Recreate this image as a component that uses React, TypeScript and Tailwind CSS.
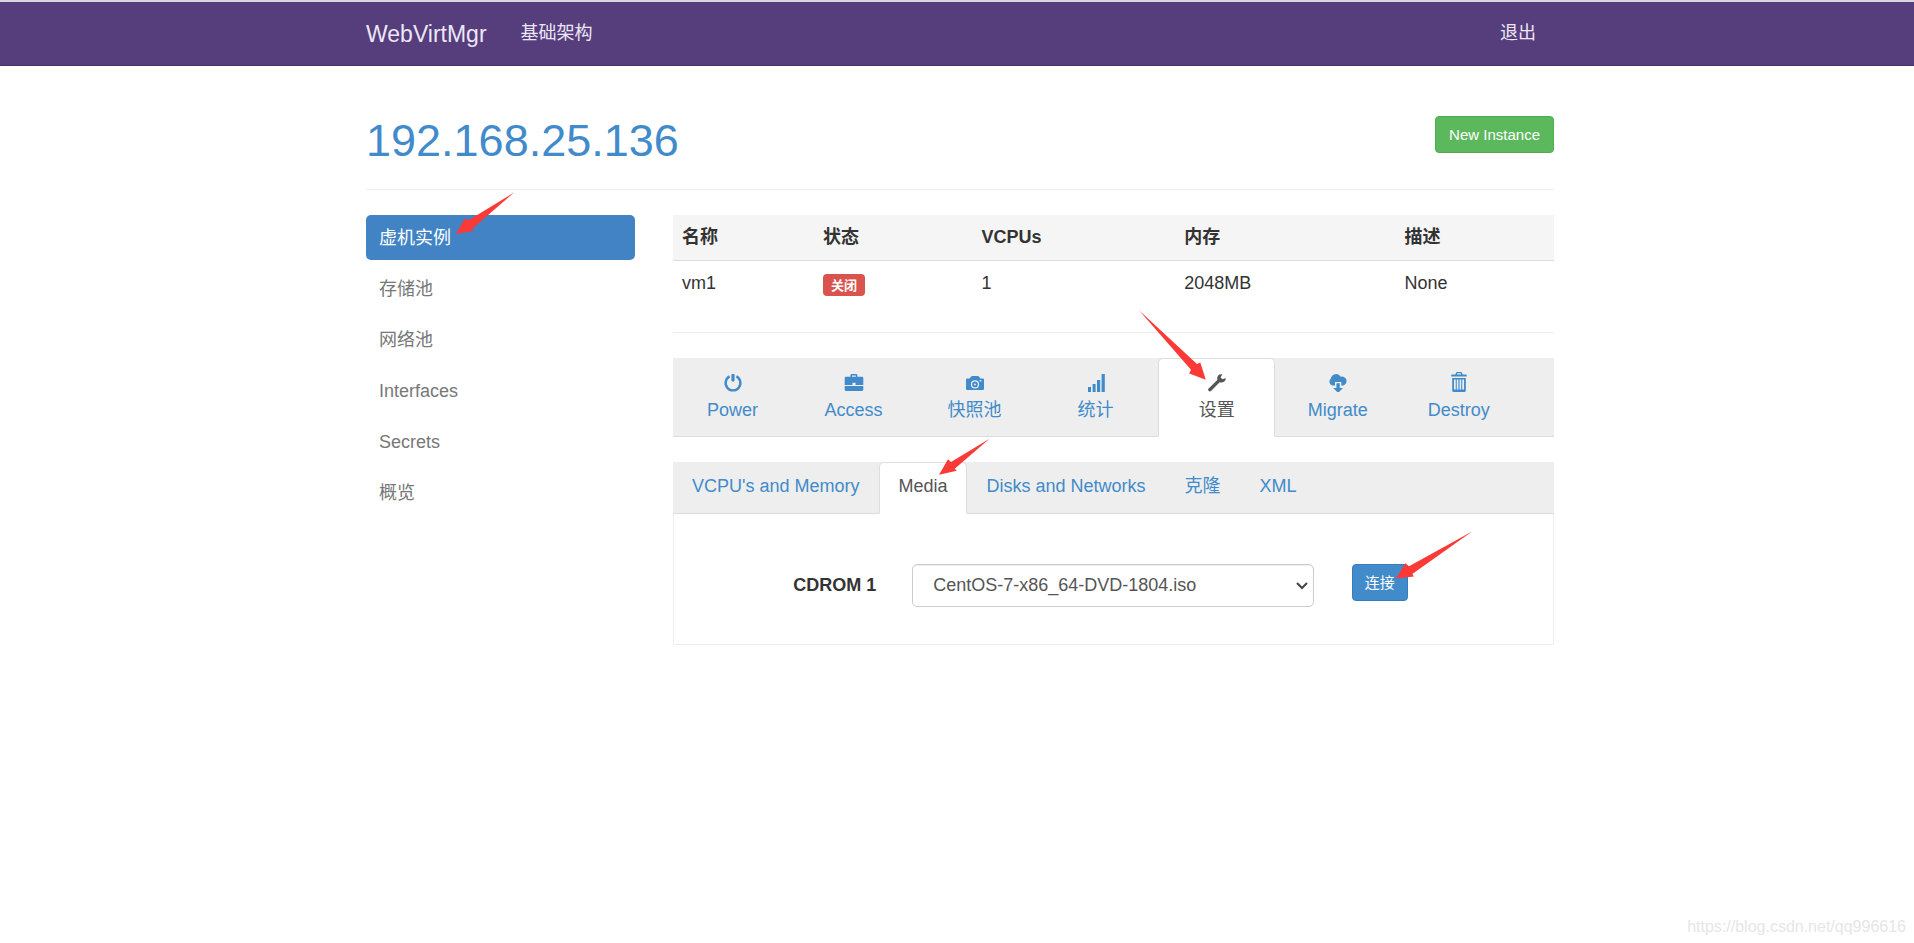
import React, { useState } from "react";

type IconProps = { children: React.ReactNode };

function Glyph({ children }: IconProps) {
  return (
    <svg viewBox="0 0 20 20" width="20" height="20" fill="currentColor" aria-hidden="true">
      {children}
    </svg>
  );
}

const PowerIcon = () => (
  <Glyph>
    <path d="M6.6 4.4A7.4 7.4 0 1 0 13.4 4.4" fill="none" stroke="currentColor" strokeWidth="2.4" />
    <rect x="8.4" y="2" width="3.2" height="7.4" rx="0.8" />
  </Glyph>
);

const BriefcaseIcon = () => (
  <Glyph>
    <path
      fillRule="evenodd"
      d="M1.8 4.8H6.4V3.4Q6.4 2 7.8 2H12Q13.4 2 13.4 3.4V4.8H18.2Q19.3 4.8 19.3 5.9V13H11.5V10.8H8.5V13H.7V5.9Q.7 4.8 1.8 4.8ZM8 4.8H11.8V3.5H8Z"
    />
    <path d="M.7 14.1H19.3V17.4Q19.3 19 17.7 19H2.3Q.7 19 .7 17.4Z" />
  </Glyph>
);

const CameraIcon = () => (
  <Glyph>
    <path
      fillRule="evenodd"
      d="M2.2 6.4H4.6L6.1 4.5Q6.6 4 7.3 4H12.7Q13.4 4 13.9 4.5L15.4 6.4H17.8Q19 6.4 19 7.6V16.8Q19 18 17.8 18H2.2Q1 18 1 16.8V7.6Q1 6.4 2.2 6.4ZM10 8.3A4.1 4.1 0 1 0 10 16.5A4.1 4.1 0 1 0 10 8.3ZM14.7 8H16.3V9.6H14.7Z"
    />
    <circle cx="10" cy="12.4" r="1.9" fill="none" stroke="currentColor" strokeWidth="1.9" />
  </Glyph>
);

const SignalIcon = () => (
  <Glyph>
    <rect x="2" y="15" width="3" height="5" />
    <rect x="6.6" y="12" width="3" height="8" />
    <rect x="11" y="8" width="3.2" height="12" />
    <rect x="15.6" y="2" width="3.2" height="18" />
  </Glyph>
);

const WrenchIcon = () => (
  <Glyph>
    <path d="M15.4 2.2 13.5 5.4 15.6 7.3 18.8 5.9Q19 8.5 17 9.8Q15.3 10.8 12.7 10.2L4 19.1Q3.1 20 2.2 19.2L1.4 18.4Q.6 17.5 1.4 16.7L10.3 8Q9.8 5.3 11.1 3.6Q12.6 1.8 15.4 2.2Z" />
  </Glyph>
);

const CloudDownloadIcon = () => (
  <Glyph>
    <path d="M4.4 13.4A3.9 3.9 0 0 1 2.8 6.6A5.4 5.4 0 0 1 12.8 4.8A4.4 4.4 0 1 1 15.4 13.4H13.3V10H7V13.4Z" />
    <path d="M8.4 11.2H11.8V16H15L10.1 20.9 5.2 16H8.4Z" />
  </Glyph>
);

const TrashIcon = () => (
  <Glyph>
    <path
      fillRule="evenodd"
      d="M2.2 3.2Q2.2 2.4 3 2.4H6.4L7 .8Q7.3 0 8.1 0H11.9Q12.7 0 13 .8L13.6 2.4H17Q17.8 2.4 17.8 3.2V4.4H2.2ZM8 2.4H12L11.6 1.3H8.4Z"
    />
    <path
      fillRule="evenodd"
      d="M3.2 6H16.8V18.4Q16.8 20 15.2 20H4.8Q3.2 20 3.2 18.4ZM5 7.4V17.6H6.7V7.4ZM7.8 7.4V17.6H9.4V7.4ZM10.6 7.4V17.6H12.2V7.4ZM13.3 7.4V17.6H15V7.4Z"
    />
  </Glyph>
);

const sidebar = ["虚机实例", "存储池", "网络池", "Interfaces", "Secrets", "概览"];

const actions = [
  { label: "Power", Icon: PowerIcon },
  { label: "Access", Icon: BriefcaseIcon },
  { label: "快照池", Icon: CameraIcon },
  { label: "统计", Icon: SignalIcon },
  { label: "设置", Icon: WrenchIcon },
  { label: "Migrate", Icon: CloudDownloadIcon },
  { label: "Destroy", Icon: TrashIcon },
];

const settingTabs = ["VCPU's and Memory", "Media", "Disks and Networks", "克隆", "XML"];

function Navbar() {
  return (
    <nav className="border-t-2 border-t-[#d9d6e0] border-b border-b-[#463265] bg-[#563d7c] pl-1.5">
      <div className="mx-auto flex h-[63px] max-w-[1188px] items-center text-[#ece6f5]">
        <a href="#home" className="text-[23px] leading-7">WebVirtMgr</a>
        <a href="#infrastructure" className="ml-[34px]">基础架构</a>
        <a href="#logout" className="mr-[18px] ml-auto">退出</a>
      </div>
    </nav>
  );
}

function Sidebar() {
  return (
    <ul className="flex w-[269px] shrink-0 flex-col gap-1.5">
      {sidebar.map((item, i) => (
        <li key={item}>
          <a
            href={`#${i}`}
            className={
              i === 0
                ? "block rounded-[5px] bg-[#4183c4] px-[13px] pt-[11px] pb-[9px] text-white"
                : "block px-[13px] pt-[11px] pb-[9px] text-[#777]"
            }
          >
            {item}
          </a>
        </li>
      ))}
    </ul>
  );
}

function InstanceTable() {
  return (
    <table className="w-full table-fixed text-left">
      <thead className="border-b border-[#ddd] bg-[#f5f5f5]">
        <tr>
          <th className="w-[16%] px-[9px] py-2.5">名称</th>
          <th className="w-[18%] px-[9px] py-2.5">状态</th>
          <th className="w-[23%] px-[9px] py-2.5">VCPUs</th>
          <th className="w-[25%] px-[9px] py-2.5">内存</th>
          <th className="w-[18%] px-[9px] py-2.5">描述</th>
        </tr>
      </thead>
      <tbody>
        <tr className="align-top">
          <td className="px-[9px] py-2.5">vm1</td>
          <td className="px-[9px] pt-[13px]">
            <span className="flex h-[22px] w-fit items-center rounded-[4px] bg-[#d9534f] px-2 text-[13px] font-bold text-white">
              关闭
            </span>
          </td>
          <td className="px-[9px] py-2.5">1</td>
          <td className="px-[9px] py-2.5">2048MB</td>
          <td className="px-[9px] py-2.5">None</td>
        </tr>
      </tbody>
    </table>
  );
}

function ActionTabs() {
  return (
    <ul className="mt-[25px] flex gap-1 border-b border-[#ddd] bg-[#eee] pl-px">
      {actions.map(({ label, Icon }) => (
        <li key={label} className="-mb-px w-[13.3%]">
          <a
            href={`#${label}`}
            className={
              label === "设置"
                ? "flex flex-col items-center gap-1.5 rounded-t-[5px] border border-[#ddd] border-b-white bg-white py-[13px] text-[#555]"
                : "flex flex-col items-center gap-1.5 border border-transparent py-[13px] text-[#428bca]"
            }
          >
            <Icon />
            <span>{label}</span>
          </a>
        </li>
      ))}
    </ul>
  );
}

function SettingTabs() {
  return (
    <ul className="mt-[25px] flex gap-px border-b border-[#ddd] bg-[#eee]">
      {settingTabs.map((label) => (
        <li key={label} className="-mb-px">
          <a
            href={`#${label}`}
            className={
              label === "Media"
                ? "block rounded-t-[5px] border border-[#ddd] border-b-white bg-white px-[18px] pt-[11px] pb-3.5 text-[#555]"
                : "block border border-transparent px-[18px] pt-[11px] pb-3.5 text-[#428bca]"
            }
          >
            {label}
          </a>
        </li>
      ))}
    </ul>
  );
}

function MediaPanel() {
  const [iso, setIso] = useState("CentOS-7-x86_64-DVD-1804.iso");
  return (
    <form
      className="grid grid-cols-[23%_50%_1fr] items-start border border-t-0 border-[#eee] pt-[50px] pb-[37px]"
      onSubmit={(e) => e.preventDefault()}
    >
      <label htmlFor="cdrom" className="py-[9px] text-right font-bold">
        CDROM 1
      </label>
      <div className="relative ml-9 mr-0.5">
        <select
          id="cdrom"
          value={iso}
          onChange={(e) => setIso(e.target.value)}
          className="h-[43px] w-full appearance-none rounded-[5px] border border-[#ccc] bg-white pr-8 pl-5 text-[#555] shadow-[inset_0_1px_1px_rgba(0,0,0,0.075)]"
        >
          <option>CentOS-7-x86_64-DVD-1804.iso</option>
        </select>
        <svg
          viewBox="0 0 12 8"
          width="12"
          height="8"
          fill="none"
          stroke="#444"
          strokeWidth="2"
          className="pointer-events-none absolute top-[18px] right-1.5"
          aria-hidden="true"
        >
          <path d="M1 1 6 6 11 1" />
        </svg>
      </div>
      <div className="pl-9">
        <button
          type="submit"
          className="h-[37px] rounded-[4px] border border-[#357ebd] bg-[#428bca] px-3 text-[15px] leading-5 text-white"
        >
          连接
        </button>
      </div>
    </form>
  );
}

function Arrows() {
  return (
    <svg
      className="pointer-events-none absolute top-0 left-0 overflow-visible"
      width="1188"
      height="620"
      viewBox="366 66 1188 620"
      fill="#fb3a37"
      aria-hidden="true"
    >
      <path d="M514.3 192.3 472 229 473.7 230.8 456 234 465 218.2 468.2 220.6Z" />
      <path d="M1139 310.3 1197 364 1200.3 362.6 1205.8 379.8 1189.2 373.4 1191 369.8Z" />
      <path d="M989.5 438.7 954.7 468.7 956.8 470.8 939 474.8 948 459.2 951 462Z" />
      <path d="M1472.5 531.2 1412.3 574 1414 576.5 1396 578.5 1405.4 563.2 1409 566.3Z" />
    </svg>
  );
}

export default function App() {
  return (
    <div className="relative min-h-screen bg-white font-['Liberation_Sans','Noto_Sans_CJK_SC',sans-serif] text-[18px] leading-[25px] text-[#333]">
      <Navbar />
      <div className="pl-1.5">
        <main className="relative mx-auto max-w-[1188px] pt-[50px]">
          <header className="flex items-start justify-between border-b border-[#eee] pb-[23px]">
            <h1 className="text-[45px] leading-[50px] text-[#428bca]">
              <a href="#host">192.168.25.136</a>
            </h1>
            <button
              type="button"
              className="h-[37px] rounded-[4px] border border-[#4cae4c] bg-[#5cb85c] px-[13px] text-[15px] leading-5 text-white"
            >
              New Instance
            </button>
          </header>
          <div className="mt-[25px] flex gap-[38px]">
            <Sidebar />
            <section className="min-w-0 flex-1">
              <InstanceTable />
              <hr className="mt-[26px] border-[#eee]" />
              <ActionTabs />
              <SettingTabs />
              <MediaPanel />
            </section>
          </div>
          <Arrows />
        </main>
      </div>
      <p className="absolute right-2 bottom-1.5 text-[16px] leading-5 text-[#e6e6e6]">
        https://blog.csdn.net/qq996616
      </p>
    </div>
  );
}
